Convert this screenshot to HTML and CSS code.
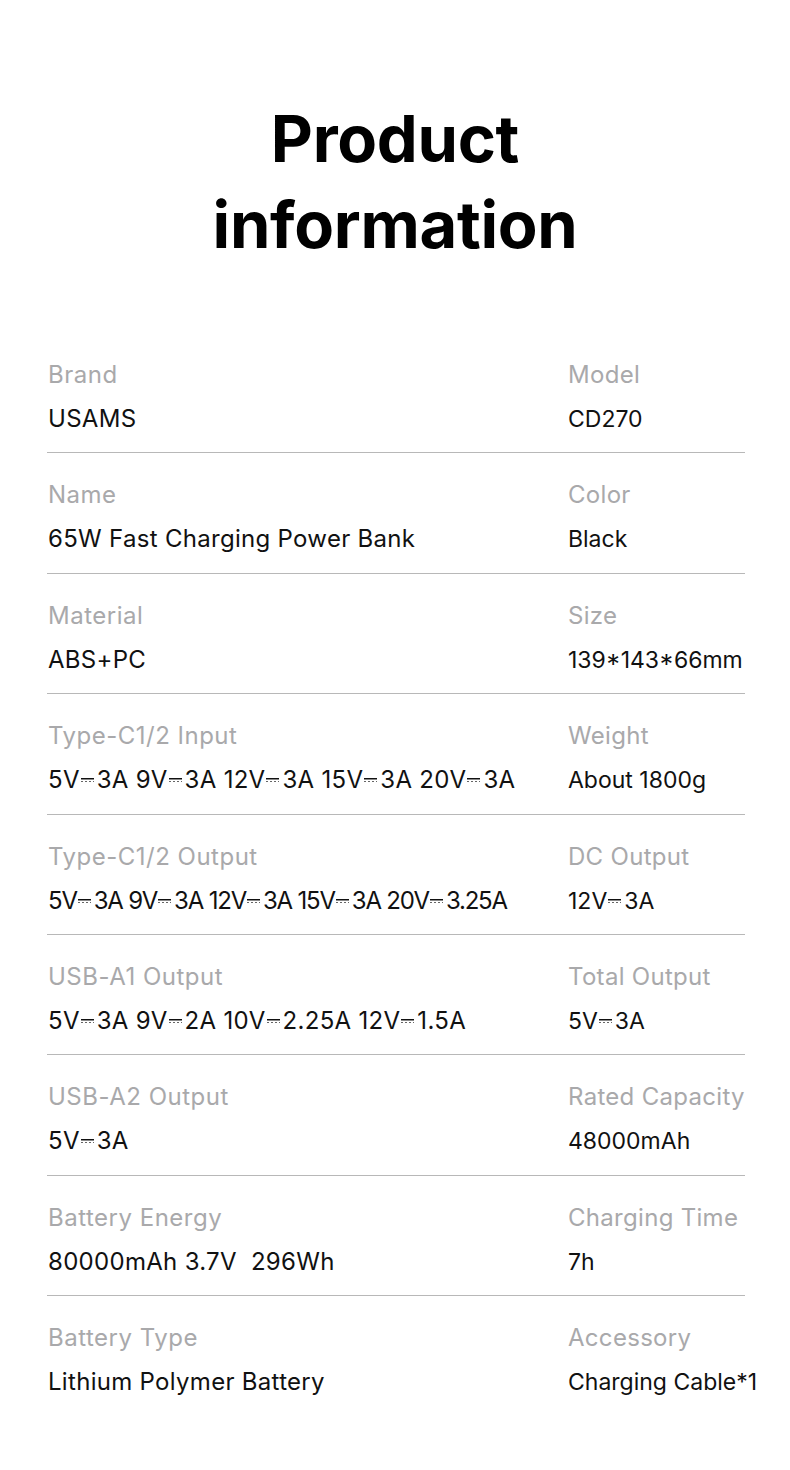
FILE: index.html
```html
<!DOCTYPE html>
<html>

<head>
    <link rel="stylesheet" href="styles.css">
</head>

<body>

    <h1 class="title">Product<br>information</h1>

    <div class="spec-list">
        <div class="spec-row">
            <div class="spec">
                <div class="label">Brand</div>
                <div class="value">USAMS</div>
            </div>
            <div class="spec">
                <div class="label">Model</div>
                <div class="value">CD270</div>
            </div>
        </div>
        <div class="spec-row">
            <div class="spec">
                <div class="label">Name</div>
                <div class="value">65W Fast Charging Power Bank</div>
            </div>
            <div class="spec">
                <div class="label">Color</div>
                <div class="value">Black</div>
            </div>
        </div>
        <div class="spec-row">
            <div class="spec">
                <div class="label">Material</div>
                <div class="value">ABS+PC</div>
            </div>
            <div class="spec">
                <div class="label">Size</div>
                <div class="value">139*143*66mm</div>
            </div>
        </div>
        <div class="spec-row">
            <div class="spec">
                <div class="label">Type-C1/2 Input</div>
                <div class="value">5V<span class="dc"></span>3A 9V<span class="dc"></span>3A 12V<span class="dc"></span>3A 15V<span class="dc"></span>3A 20V<span class="dc"></span>3A</div>
            </div>
            <div class="spec">
                <div class="label">Weight</div>
                <div class="value">About 1800g</div>
            </div>
        </div>
        <div class="spec-row">
            <div class="spec">
                <div class="label">Type-C1/2 Output</div>
                <div class="value tight">5V<span class="dc"></span>3A 9V<span class="dc"></span>3A 12V<span class="dc"></span>3A 15V<span class="dc"></span>3A 20V<span class="dc"></span>3.25A</div>
            </div>
            <div class="spec">
                <div class="label">DC Output</div>
                <div class="value">12V<span class="dc"></span>3A</div>
            </div>
        </div>
        <div class="spec-row">
            <div class="spec">
                <div class="label">USB-A1 Output</div>
                <div class="value">5V<span class="dc"></span>3A 9V<span class="dc"></span>2A 10V<span class="dc"></span>2.25A 12V<span class="dc"></span>1.5A</div>
            </div>
            <div class="spec">
                <div class="label">Total Output</div>
                <div class="value">5V<span class="dc"></span>3A</div>
            </div>
        </div>
        <div class="spec-row">
            <div class="spec">
                <div class="label">USB-A2 Output</div>
                <div class="value">5V<span class="dc"></span>3A</div>
            </div>
            <div class="spec">
                <div class="label">Rated Capacity</div>
                <div class="value">48000mAh</div>
            </div>
        </div>
        <div class="spec-row">
            <div class="spec">
                <div class="label">Battery Energy</div>
                <div class="value">80000mAh 3.7V&nbsp; 296Wh</div>
            </div>
            <div class="spec">
                <div class="label">Charging Time</div>
                <div class="value">7h</div>
            </div>
        </div>
        <div class="spec-row">
            <div class="spec">
                <div class="label">Battery Type</div>
                <div class="value">Lithium Polymer Battery</div>
            </div>
            <div class="spec">
                <div class="label">Accessory</div>
                <div class="value">Charging Cable*1</div>
            </div>
        </div>
    </div>

</body>

</html>
```

FILE: styles.css
```css
body {
    font-family: Inter, "Noto Sans", sans-serif;
    background-color: #ffffff;
    color: #111111;
    margin: 0;
}

.title {
    margin: 0;
    padding-top: 96px;
    font-size: 65px;
    font-weight: 700;
    line-height: 86px;
    text-align: center;
    letter-spacing: -0.3px;
    color: #000000;
}

.spec-list {
    width: 698px;
    margin-left: 47px;
    margin-top: 65px;
}

.spec-row {
    display: grid;
    grid-template-columns: 520px auto;
    padding: 26px 0 17.4px 1px;
    border-bottom: 1px solid #b8b8b8;
}

.spec-row:last-child {
    border-bottom: none;
}

.spec {
    display: flex;
    flex-direction: column;
    gap: 12px;
    white-space: nowrap;
}

.label {
    font-size: 24px;
    line-height: 32px;
    letter-spacing: 0.5px;
    color: #a9a9ab;
}

.value {
    font-size: 24px;
    line-height: 32px;
    letter-spacing: 0.3px;
    color: #111111;
}

.spec + .spec .label {
    letter-spacing: 0.3px;
}

.spec + .spec .value {
    font-size: 23px;
    letter-spacing: 0;
}

.value.tight {
    letter-spacing: -1.2px;
}

.dc {
    display: inline-block;
    width: 13px;
    height: 4px;
    margin: 0 3px 0 1px;
    vertical-align: 0.25em;
    background:
        linear-gradient(#111111, #111111) top / 100% 1.5px no-repeat,
        repeating-linear-gradient(90deg, #666666 0 2px, transparent 2px 4px) bottom / 100% 1px no-repeat;
}
```
